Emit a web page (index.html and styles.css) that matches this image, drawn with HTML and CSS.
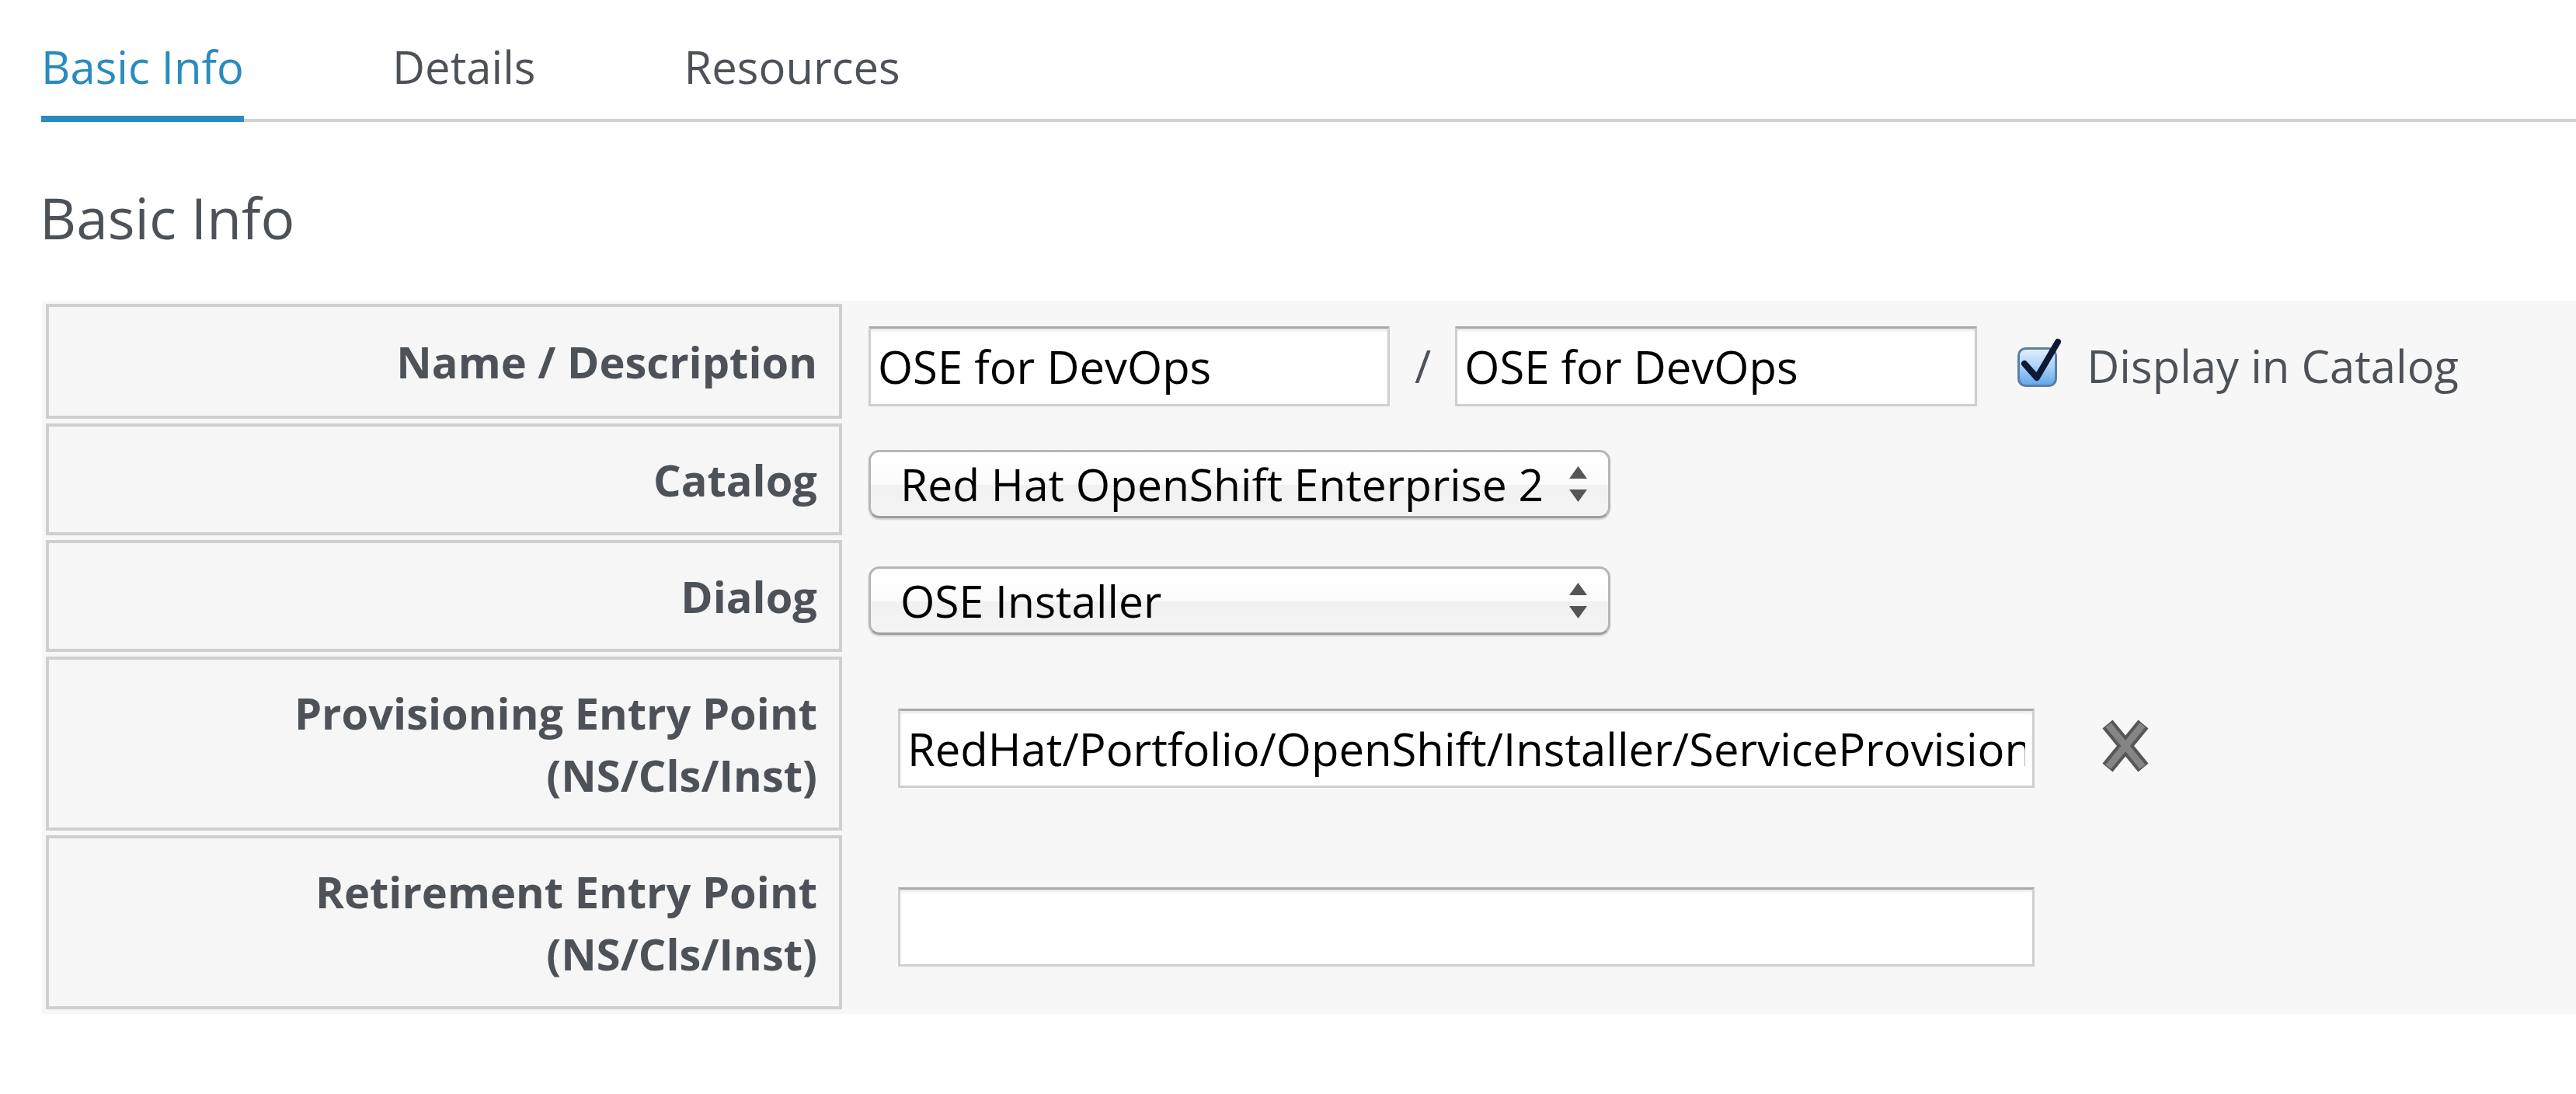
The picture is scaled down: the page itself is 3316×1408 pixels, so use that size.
FILE: index.html
```html
<!DOCTYPE html>
<html lang="en">
<head>
<meta charset="utf-8">
<title>Basic Info</title>
<link rel="stylesheet" href="styles.css">
</head>
<body>
<nav class="tabs">
  <ul class="tab-list">
    <li class="tab active"><a>Basic Info</a></li>
    <li class="tab"><a>Details</a></li>
    <li class="tab"><a>Resources</a></li>
  </ul>
</nav>
<h2 class="section-title">Basic Info</h2>
<div class="form-grid">
  <div class="label">Name / Description</div>
  <div class="value">
    <input class="text-input name-input" type="text" value="OSE for DevOps">
    <span class="sep">/</span>
    <input class="text-input desc-input" type="text" value="OSE for DevOps">
    <label class="check">
      <svg class="check-box" width="60" height="66" viewBox="0 0 60 66">
        <defs>
          <linearGradient id="cbg" x1="0" y1="0" x2="0" y2="1">
            <stop offset="0" stop-color="#e3f0fd"/>
            <stop offset="0.5" stop-color="#a9d0f6"/>
            <stop offset="1" stop-color="#5ea5ec"/>
          </linearGradient>
        </defs>
        <rect x="3.5" y="14.5" width="48" height="48" rx="9" fill="url(#cbg)" stroke="#5b7ea6" stroke-width="3"/>
        <path d="M11 34 L27 52 L54 6" fill="none" stroke="#0c1b33" stroke-width="8" stroke-linecap="round" stroke-linejoin="round"/>
      </svg>
      <span class="check-text">Display in Catalog</span>
    </label>
  </div>

  <div class="label">Catalog</div>
  <div class="value">
    <div class="select">
      <span>Red Hat OpenShift Enterprise 2</span>
      <svg class="arrows" width="23" height="46" viewBox="0 0 23 46"><path d="M11.5 0 L23 16 L0 16 Z M0 30 L23 30 L11.5 46 Z" fill="#555"/></svg>
    </div>
  </div>

  <div class="label">Dialog</div>
  <div class="value">
    <div class="select">
      <span>OSE Installer</span>
      <svg class="arrows" width="23" height="46" viewBox="0 0 23 46"><path d="M11.5 0 L23 16 L0 16 Z M0 30 L23 30 L11.5 46 Z" fill="#555"/></svg>
    </div>
  </div>

  <div class="label">Provisioning Entry Point<br>(NS/Cls/Inst)</div>
  <div class="value">
    <input class="text-input entry-input" type="text" value="RedHat/Portfolio/OpenShift/Installer/ServiceProvision_Template">
    <svg class="remove" width="66" height="70" viewBox="0 0 66 70">
      <path d="M10 7 L56 63 M56 7 L10 63" stroke="#575757" stroke-width="17"/>
      <path d="M11 8 L55 62 M55 8 L11 62" stroke="#858585" stroke-width="9"/>
    </svg>
  </div>

  <div class="label">Retirement Entry Point<br>(NS/Cls/Inst)</div>
  <div class="value">
    <input class="text-input entry-input" type="text" value="">
  </div>
</div>
</body>
</html>
```
FILE: styles.css
```css
html, body {
  margin: 0;
  padding: 0;
  background: #ffffff;
  font-family: "Open Sans", "Liberation Sans", sans-serif;
  color: #4d5258;
}

.tab-list {
  display: flex;
  gap: 191px;
  margin: 0 0 0 53px;
  padding: 0;
  list-style: none;
  border-bottom: 4px solid #d1d1d1;
}

.tab {
  margin-bottom: -4px;
}

.tab a {
  display: block;
  padding: 46px 0 23px;
  font-size: 58px;
  line-height: 80px;
  color: #4d5258;
  border-bottom: 8px solid transparent;
}

.tab.active a {
  color: #2a8bc0;
  border-bottom-color: #2a8bc0;
}

.section-title {
  margin: 73px 0 0 51px;
  font-size: 73px;
  line-height: 100px;
  font-weight: 400;
  color: #4d5258;
}

.form-grid {
  display: grid;
  grid-template-columns: 1025px 1fr;
  grid-template-rows: 148px 144px 144px 224px 224px;
  column-gap: 4px;
  row-gap: 6px;
  margin: 57px 0 0 54px;
  padding: 4px 0 6px 5px;
  background: #f7f7f7;
}

.label {
  box-sizing: border-box;
  border: 4px solid #cfcfcf;
  background: #f6f6f6;
  display: flex;
  align-items: center;
  justify-content: flex-end;
  text-align: right;
  padding-right: 28px;
  font-size: 56px;
  line-height: 80px;
  font-weight: 700;
  color: #4d5258;
}

.value {
  display: flex;
  align-items: center;
  padding: 12px 0 0 30px;
}

.text-input {
  box-sizing: border-box;
  height: 103px;
  margin: 0;
  padding: 0 9px;
  font-family: "Open Sans", "Liberation Sans", sans-serif;
  font-size: 58px;
  color: #000;
  background: #fff;
  border: 3px solid #cfcfcf;
  border-top-color: #a9a9a9;
  box-shadow: inset 0 3px 3px rgba(0, 0, 0, 0.08);
  outline: none;
}

.name-input {
  width: 671px;
}

.desc-input {
  width: 672px;
}

.sep {
  font-size: 58px;
  line-height: 80px;
  margin: 0 31px 0 32px;
  color: #4d5258;
}

.check {
  display: flex;
  align-items: center;
  margin-left: 50px;
}

.check-box {
  margin-bottom: 9px;
}

.check-text {
  margin-left: 31px;
  font-size: 58px;
  line-height: 80px;
  color: #4d5258;
}

.select {
  box-sizing: border-box;
  width: 955px;
  height: 88px;
  display: flex;
  align-items: center;
  justify-content: space-between;
  padding: 0 27px 0 38px;
  font-size: 57px;
  line-height: 80px;
  color: #000;
  border: 3px solid #b6b6b6;
  border-bottom-color: #9e9e9e;
  border-radius: 14px;
  background: linear-gradient(#ffffff 0%, #fbfbfb 50%, #f1f1f1 52%, #f4f4f4 100%);
  box-shadow: 0 2px 2px rgba(0, 0, 0, 0.15);
}

.entry-input {
  width: 1463px;
  height: 102px;
  margin-left: 38px;
}

.remove {
  margin-left: 84px;
  margin-bottom: 6px;
}
```
